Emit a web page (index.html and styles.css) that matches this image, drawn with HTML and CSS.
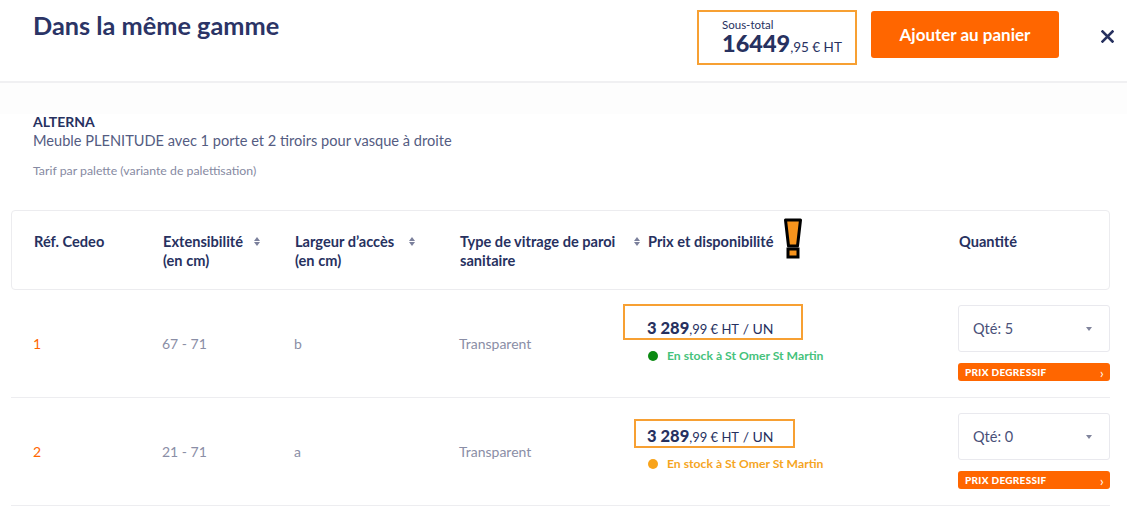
FILE: index.html
```html
<!DOCTYPE html>
<html lang="fr">
<head>
<meta charset="utf-8">
<title>Dans la même gamme</title>
<link rel="stylesheet" href="styles.css">
</head>
<body>
<header class="top">
  <h1 class="title">Dans la même gamme</h1>
  <div class="actions">
    <div class="subtotal">
      <span class="subtotal-label">Sous-total</span>
      <span class="subtotal-value"><b>16449</b><small>,95 € HT</small></span>
    </div>
    <button class="cart-btn">Ajouter au panier</button>
    <button class="close" aria-label="Fermer">
      <svg width="13" height="13" viewBox="0 0 13 13"><path d="M1.5 1.5 L11.5 11.5 M11.5 1.5 L1.5 11.5" stroke="#27315f" stroke-width="2.6" stroke-linecap="square"/></svg>
    </button>
  </div>
</header>
<div class="band"></div>
<section class="intro">
  <div class="brand">ALTERNA</div>
  <div class="product">Meuble PLENITUDE avec 1 porte et 2 tiroirs pour vasque à droite</div>
  <div class="tarif">Tarif par palette (variante de palettisation)</div>
</section>
<section class="table">
  <div class="thead grid">
    <div class="th">Réf. Cedeo</div>
    <div class="th">Extensibilité<br>(en cm)<span class="sort"></span></div>
    <div class="th">Largeur d’accès<br>(en cm)<span class="sort"></span></div>
    <div class="th th-wide"><span>Type de vitrage de paroi<br>sanitaire</span><span class="sort"></span></div>
    <div class="th">Prix et disponibilité
      <svg class="warn" width="20" height="42" viewBox="0 0 20 42"><path d="M2.5 2 H17.5 L14.5 28 H5.5 Z" fill="#f7941d" stroke="#000" stroke-width="3" stroke-linejoin="round"/><rect x="5" y="31" width="10" height="8" fill="#f7941d" stroke="#000" stroke-width="3"/></svg>
    </div>
    <div class="th">Quantité</div>
  </div>

  <div class="row grid">
    <div class="ref">1</div>
    <div class="cell">67 - 71</div>
    <div class="cell">b</div>
    <div class="cell">Transparent</div>
    <div class="price-cell">
      <div class="price"><span class="mark mark-a"></span><b>3 289</b><small>,99 € HT</small> / UN</div>
      <div class="stock stock-green"><span class="dot"></span>En stock à St Omer St Martin</div>
    </div>
    <div class="qty-cell">
      <div class="select">Qté: 5<span class="caret"></span></div>
      <div class="degressif">PRIX DEGRESSIF<span class="chev">›</span></div>
    </div>
  </div>

  <div class="row grid">
    <div class="ref">2</div>
    <div class="cell">21 - 71</div>
    <div class="cell">a</div>
    <div class="cell">Transparent</div>
    <div class="price-cell">
      <div class="price"><span class="mark mark-b"></span><b>3 289</b><small>,99 € HT</small> / UN</div>
      <div class="stock stock-orange"><span class="dot"></span>En stock à St Omer St Martin</div>
    </div>
    <div class="qty-cell">
      <div class="select">Qté: 0<span class="caret"></span></div>
      <div class="degressif">PRIX DEGRESSIF<span class="chev">›</span></div>
    </div>
  </div>
</section>
</body>
</html>
```
FILE: styles.css
```css
* { box-sizing: border-box; }
html, body { margin: 0; padding: 0; background: #fff; }
body {
  font-family: Lato, "Open Sans", sans-serif;
  color: #27315f;
  width: 1127px;
  overflow: hidden;
}

.top {
  height: 83px;
  border-bottom: 2px solid #f0f0f2;
  display: flex;
  justify-content: space-between;
  align-items: flex-start;
  padding: 0 13px 0 33px;
}
.title {
  margin: 10px 0 0;
  font-size: 25.3px;
  font-weight: 700;
  color: #2b3466;
}
.actions {
  display: flex;
  align-items: flex-start;
  padding-top: 10px;
}
.subtotal {
  width: 160px;
  height: 55px;
  border: 2px solid #f7a033;
  display: flex;
  flex-direction: column;
  padding: 7px 0 0 23px;
}
.subtotal-label { font-size: 11.5px; line-height: 12px; color: #27315f; }
.subtotal-value { line-height: 24px; white-space: nowrap; }
.subtotal-value b { font-size: 23.5px; font-weight: 900; color: #27315f; }
.subtotal-value small { font-size: 13.5px; color: #27315f; }

.cart-btn {
  margin: 1px 0 0 14px;
  width: 188px;
  height: 47px;
  border: 0;
  border-radius: 3px;
  background: #ff6600;
  color: #fff;
  font-family: inherit;
  font-size: 17px;
  font-weight: 700;
  cursor: pointer;
}
.close {
  margin: 20px 0 0 42px;
  width: 13px;
  height: 13px;
  border: 0;
  padding: 0;
  background: none;
  display: flex;
}

.band { height: 31px; background: #fdfdfd; }

.intro { padding-left: 33px; }
.brand { font-size: 14px; font-weight: 700; line-height: 16px; color: #27315f; }
.product { font-size: 14.6px; line-height: 20px; color: #545c82; margin-top: 1px; }
.tarif { font-size: 12.3px; line-height: 14px; color: #868aa2; margin-top: 13px; }

.table { margin: 32px 17px 0 11px; }
.grid {
  display: grid;
  grid-template-columns: 129px 132px 165px 188px 311px 1fr;
  padding-left: 22px;
}
.thead {
  height: 80px;
  border: 1px solid #ececef;
  border-radius: 4px;
  padding-top: 21px;
}
.th {
  position: relative;
  font-size: 14.6px;
  font-weight: 700;
  line-height: 19px;
  color: #27315f;
  white-space: nowrap;
}
.th-wide { display: flex; justify-content: space-between; padding-right: 7px; }
.sort {
  display: inline-block;
  position: relative;
  width: 7px;
  height: 10px;
  vertical-align: top;
  margin-top: 5px;
}
.th > br + .sort { position: absolute; top: 0; }
.sort::before, .sort::after {
  content: "";
  position: absolute;
  left: 0;
  border-left: 3.5px solid transparent;
  border-right: 3.5px solid transparent;
}
.sort::before { top: 0; border-bottom: 4px solid #7b809c; }
.sort::after { top: 5px; border-top: 4px solid #7b809c; }

.th:nth-child(2) .sort { left: 91px; }
.th:nth-child(3) .sort { left: 114px; }

.warn { position: absolute; left: 135px; top: -14px; }

.row {
  height: 108px;
  border-bottom: 1px solid #ededf0;
  padding-top: 15px;
  padding-bottom: 16px;
  align-items: center;
}
.ref { font-size: 14px; color: #ff6600; padding-top: 1px; }
.cell { font-size: 14px; color: #8a8ea6; padding-top: 1px; }

.price-cell { padding-bottom: 4px; }
.price {
  position: relative;
  font-size: 14px;
  line-height: 20px;
  color: #27315f;
  white-space: nowrap;
}
.price b { font-size: 16.5px; font-weight: 900; }
.price small { font-size: 13px; }
.mark {
  position: absolute;
  border: 2px solid #f7a033;
}
.mark-a { left: -24px; top: -14px; width: 180px; height: 36px; }
.mark-b { left: -13px; top: -7px; width: 161px; height: 29px; }

.stock {
  display: flex;
  align-items: center;
  gap: 9px;
  margin-top: 9px;
  font-size: 12.2px;
  line-height: 16px;
  font-weight: 700;
  padding-left: 1px;
  white-space: nowrap;
}
.dot { width: 10px; height: 10px; border-radius: 50%; flex: none; }
.stock-green { color: #45c27b; }
.stock-green .dot { background: #0b8a12; }
.stock-orange { color: #f5a51f; }
.stock-orange .dot { background: #f8a31a; }

.qty-cell { display: flex; flex-direction: column; gap: 11px; align-self: start; }
.select {
  height: 47px;
  border: 1px solid #e9e9ee;
  border-radius: 3px;
  display: flex;
  align-items: center;
  justify-content: space-between;
  padding: 0 17px 0 14px;
  font-size: 14.5px;
  color: #4a5179;
}
.caret {
  border-left: 3.5px solid transparent;
  border-right: 3.5px solid transparent;
  border-top: 4px solid #80849c;
}
.degressif {
  height: 18px;
  background: #ff6600;
  border-radius: 3px;
  color: #fff;
  font-size: 10px;
  font-weight: 900;
  display: flex;
  align-items: center;
  justify-content: space-between;
  padding: 0 6px 0 7px;
  letter-spacing: 0.3px;
}
.chev { font-size: 13px; line-height: 12px; font-weight: 400; padding-top: 2px; }
```
